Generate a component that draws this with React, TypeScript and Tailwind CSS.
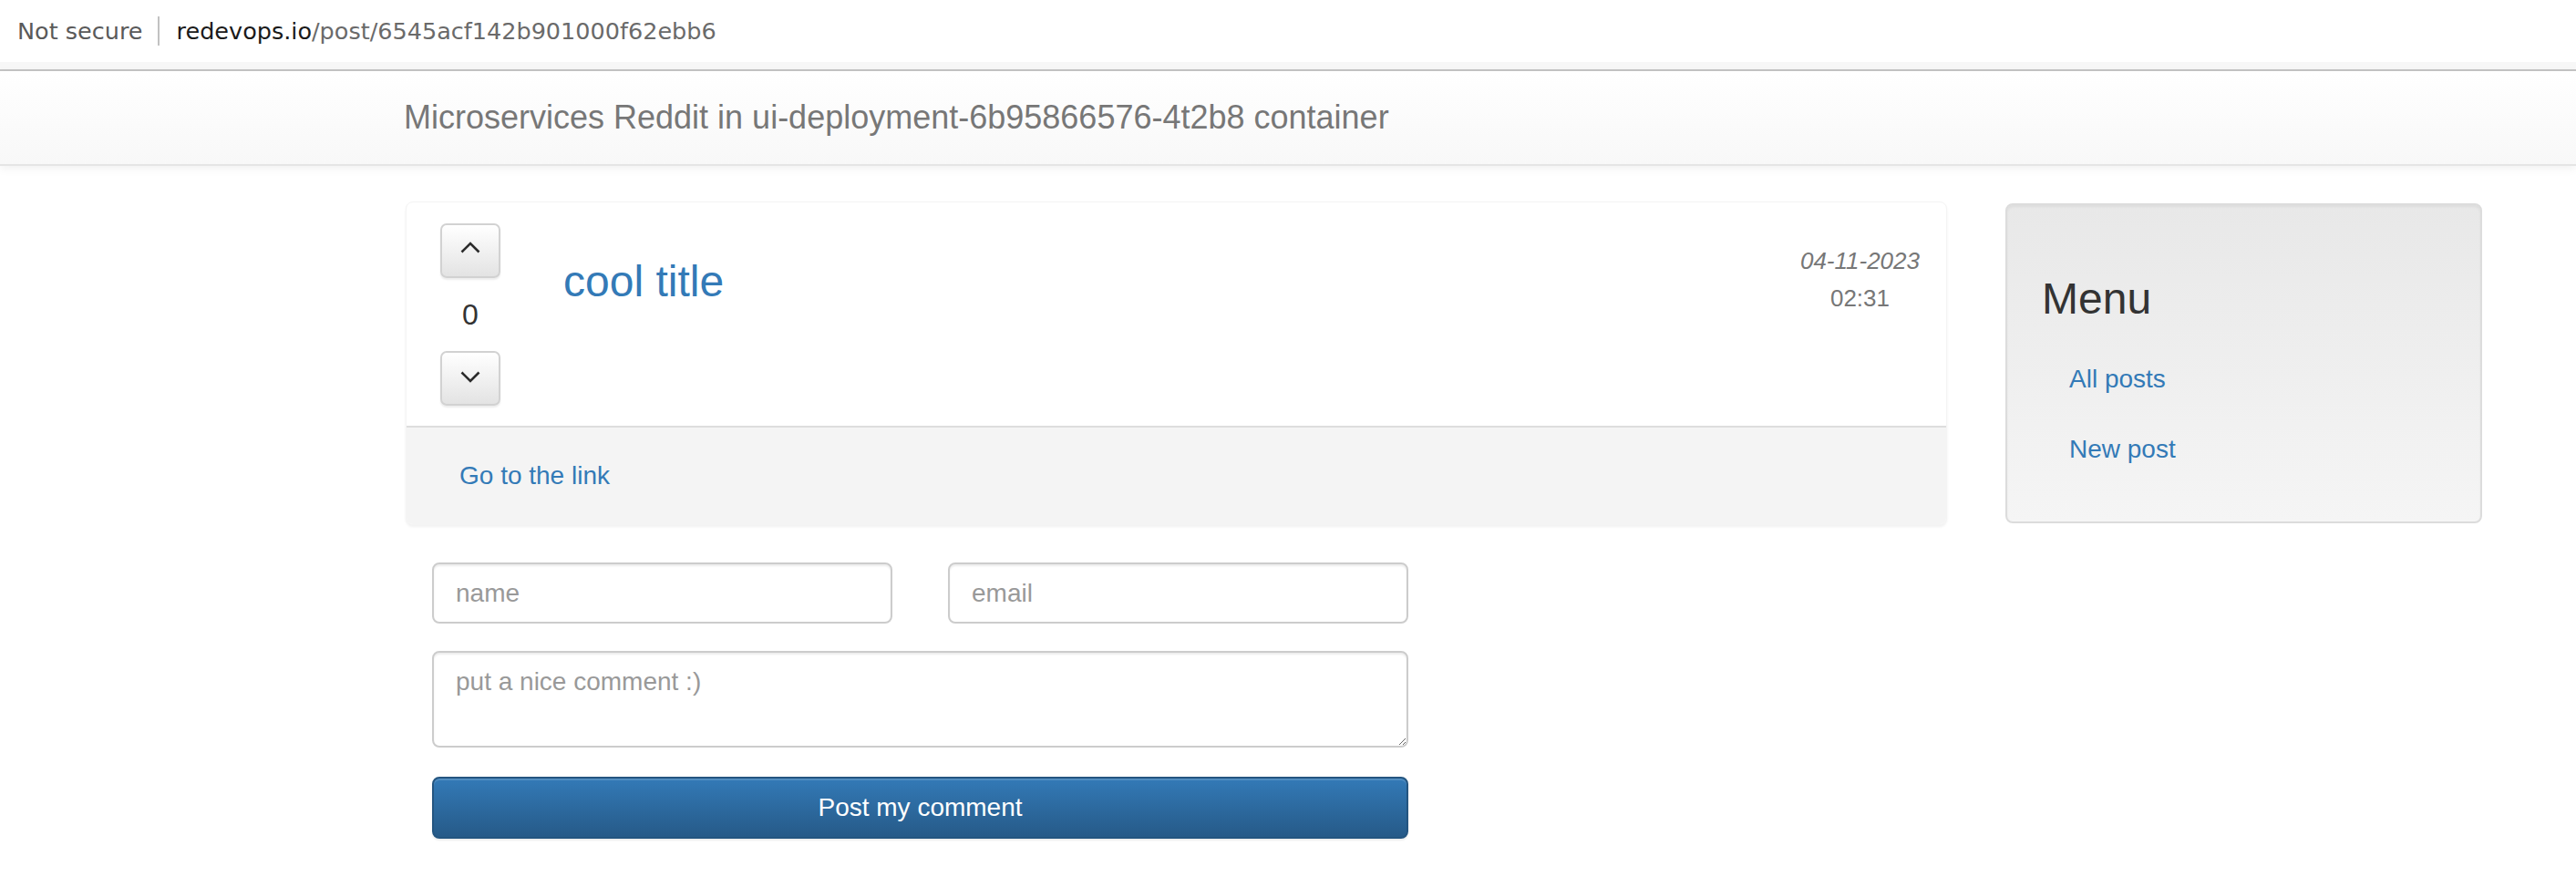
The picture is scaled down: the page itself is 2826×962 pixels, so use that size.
import { useState } from 'react';

function Chevron({ up }: { up?: boolean }) {
  return (
    <svg width="22" height="14" viewBox="0 0 22 14" className="block">
      <polyline
        points={up ? '1.5,12.5 11,3 20.5,12.5' : '1.5,1.5 11,11 20.5,1.5'}
        fill="none"
        stroke="#2b2b2b"
        strokeWidth="2.6"
      />
    </svg>
  );
}

function VoteButton({ up }: { up?: boolean }) {
  return (
    <button
      className={`w-[66px] h-[60px] flex justify-center items-center rounded-[7px] border-2 border-[#d2d2d2] bg-gradient-to-b from-white to-[#e3e3e3] shadow-[0_2px_2px_rgba(0,0,0,0.08)] ${
        up ? 'pb-[8px]' : 'pb-[2px]'
      }`}
    >
      <Chevron up={up} />
    </button>
  );
}

export default function App() {
  const [votes] = useState(0);

  return (
    <div className="min-h-screen w-[2826px] bg-white text-[#333]" style={{ fontFamily: '"Liberation Sans", Arial, sans-serif' }}>
      {/* browser address bar */}
      <div className="h-[68px] bg-white flex items-center pl-[19px] text-[25.5px]" style={{ fontFamily: '"DejaVu Sans", sans-serif' }}>
        <span className="text-[#5a5a5a]">Not secure</span>
        <span className="ml-[16px] mr-[19px] w-[2px] h-[32px] bg-[#c2c2c2]"></span>
        <span>
          <span className="text-[#1a1a1a]">redevops.io</span>
          <span className="text-[#6a6a6a]">/post/6545acf142b901000f62ebb6</span>
        </span>
      </div>
      <div className="h-[8px] bg-[#f7f7f7]"></div>
      <div className="h-[2px] bg-[#c4c4c4]"></div>

      {/* navbar */}
      <div className="h-[104px] flex items-center pl-[443px] bg-gradient-to-b from-white to-[#f8f8f8] border-b-2 border-[#e5e5e5] shadow-[0_3px_10px_rgba(0,0,0,0.06)]">
        <span className="text-[36px] text-[#777]">Microservices Reddit in ui-deployment-6b95866576-4t2b8 container</span>
      </div>

      <main className="flex pl-[445px] gap-[64px] mt-[39px]">
        {/* post column */}
        <div className="w-[1691px]">
          <div className="rounded-[8px] border border-[#f4f4f4] bg-white shadow-[0_2px_3px_rgba(0,0,0,0.06)] overflow-hidden">
            <div className="flex items-start pl-[37px] pr-[29px] pb-[22px] pt-[23px]">
              <div className="w-[66px] flex flex-col items-center">
                <VoteButton up />
                <div className="h-[80px] flex items-center justify-center text-[32px] text-[#333]">{votes}</div>
                <VoteButton />
              </div>
              <h3 className="ml-[69px] mt-[37px] text-[48px] leading-[53px] text-[#337ab7]">cool title</h3>
              <div className="ml-auto mt-[21px] text-center text-[26px] leading-[41px] text-[#777]">
                <div className="italic">04-11-2023</div>
                <div>02:31</div>
              </div>
            </div>
            <div className="h-[108px] border-t-2 border-[#dddddd] bg-[#f4f4f4] flex items-center pl-[58px]">
              <a className="text-[28px] text-[#337ab7]">Go to the link</a>
            </div>
          </div>

          {/* comment form */}
          <form className="w-[1071px] ml-[29px] mt-[41px] flex flex-col">
            <div className="flex gap-[61px]">
              <input
                placeholder="name"
                className="w-[505px] h-[67px] rounded-[8px] border-2 border-[#cccccc] px-[24px] text-[28px] outline-none placeholder:text-[#999] shadow-[inset_0_2px_2px_rgba(0,0,0,0.075)]"
              />
              <input
                placeholder="email"
                className="w-[505px] h-[67px] rounded-[8px] border-2 border-[#cccccc] px-[24px] text-[28px] outline-none placeholder:text-[#999] shadow-[inset_0_2px_2px_rgba(0,0,0,0.075)]"
              />
            </div>
            <textarea
              placeholder="put a nice comment :)"
              className="block mt-[30px] w-full h-[106px] rounded-[8px] border-2 border-[#cccccc] px-[24px] py-[12px] text-[28px] leading-[40px] outline-none placeholder:text-[#999] shadow-[inset_0_2px_2px_rgba(0,0,0,0.075)]"
            ></textarea>
            <button
              type="button"
              className="mt-[32px] w-full h-[68px] rounded-[8px] border-2 border-[#245580] bg-gradient-to-b from-[#337ab7] to-[#265a88] text-white text-[28px] shadow-[inset_0_2px_0_rgba(255,255,255,0.15),0_2px_2px_rgba(0,0,0,0.075)]"
            >
              Post my comment
            </button>
          </form>
        </div>

        {/* side menu */}
        <aside className="w-[523px] h-[351px] mt-[2px] rounded-[8px] border-2 border-[#dcdcdc] bg-gradient-to-b from-[#e8e8e8] to-[#f5f5f5] shadow-[inset_0_2px_3px_rgba(0,0,0,0.05)] pl-[38px] pt-[76px]">
          <h3 className="text-[48px] leading-[53px] text-[#333] mb-[23px]">Menu</h3>
          <ul>
            <li className="h-[77px] flex items-center pl-[30px]">
              <a className="text-[28px] text-[#337ab7]">All posts</a>
            </li>
            <li className="h-[77px] flex items-center pl-[30px]">
              <a className="text-[28px] text-[#337ab7]">New post</a>
            </li>
          </ul>
        </aside>
      </main>
    </div>
  );
}
